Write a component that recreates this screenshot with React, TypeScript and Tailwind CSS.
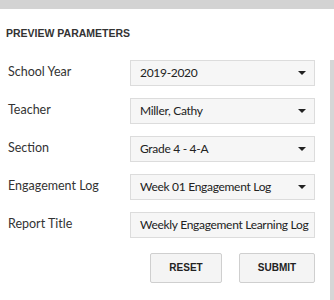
const FONT = { fontFamily: 'Lato, "Open Sans", sans-serif' };

const fields: { label: string; value: string; select: boolean }[] = [
  { label: 'School Year', value: '2019-2020', select: true },
  { label: 'Teacher', value: 'Miller, Cathy', select: true },
  { label: 'Section', value: 'Grade 4 - 4-A', select: true },
  { label: 'Engagement Log', value: 'Week 01 Engagement Log', select: true },
  { label: 'Report Title', value: 'Weekly Engagement Learning Log', select: false },
];

function Caret() {
  return (
    <svg width="8" height="4" viewBox="0 0 8 4" className="shrink-0">
      <path d="M0 0h8L4 4z" fill="#222" />
    </svg>
  );
}

export default function App() {
  return (
    <div className="h-[300px] w-[334px] overflow-hidden bg-white">
      <div className="h-[9px] bg-[#d3d3d3]" />
      <div
        className="pl-[6px] pt-[17px] text-[10.5px] font-bold text-[#333]"
        style={{ fontFamily: '"Liberation Sans", Arial, sans-serif' }}
      >
        PREVIEW PARAMETERS
      </div>
      <div className="mt-[18px] flex">
        <div className="flex min-w-0 flex-1 flex-col gap-[12px] pl-[8px] pr-[15px]" style={FONT}>
          {fields.map((f) => (
            <div key={f.label} className="flex items-center">
              <span className="w-[122px] shrink-0 text-[12.5px] text-[#333]">{f.label}</span>
              <div className="flex h-[26px] min-w-0 flex-1 items-center justify-between border border-[#dcdcdc] bg-[#f6f6f6] pl-[9px] pr-[8px]">
                <span className="whitespace-nowrap text-[12px] tracking-[-0.3px] text-[#222]">{f.value}</span>
                {f.select && <Caret />}
              </div>
            </div>
          ))}
          <div className="mt-[3px] flex justify-end gap-[17px]">
            <button
              className="h-[30px] w-[72px] rounded-[2px] border border-[#cfcfcf] bg-[#f4f4f4] text-[10px] font-bold text-[#222]"
              style={{ fontFamily: '"Liberation Sans", Arial, sans-serif' }}
            >
              RESET
            </button>
            <button
              className="h-[30px] w-[76px] rounded-[2px] border border-[#cfcfcf] bg-[#f4f4f4] text-[10px] font-bold text-[#222]"
              style={{ fontFamily: '"Liberation Sans", Arial, sans-serif' }}
            >
              SUBMIT
            </button>
          </div>
        </div>
        <div className="h-[300px] w-[4px] shrink-0 bg-[#d6d6d6]" />
      </div>
    </div>
  );
}
